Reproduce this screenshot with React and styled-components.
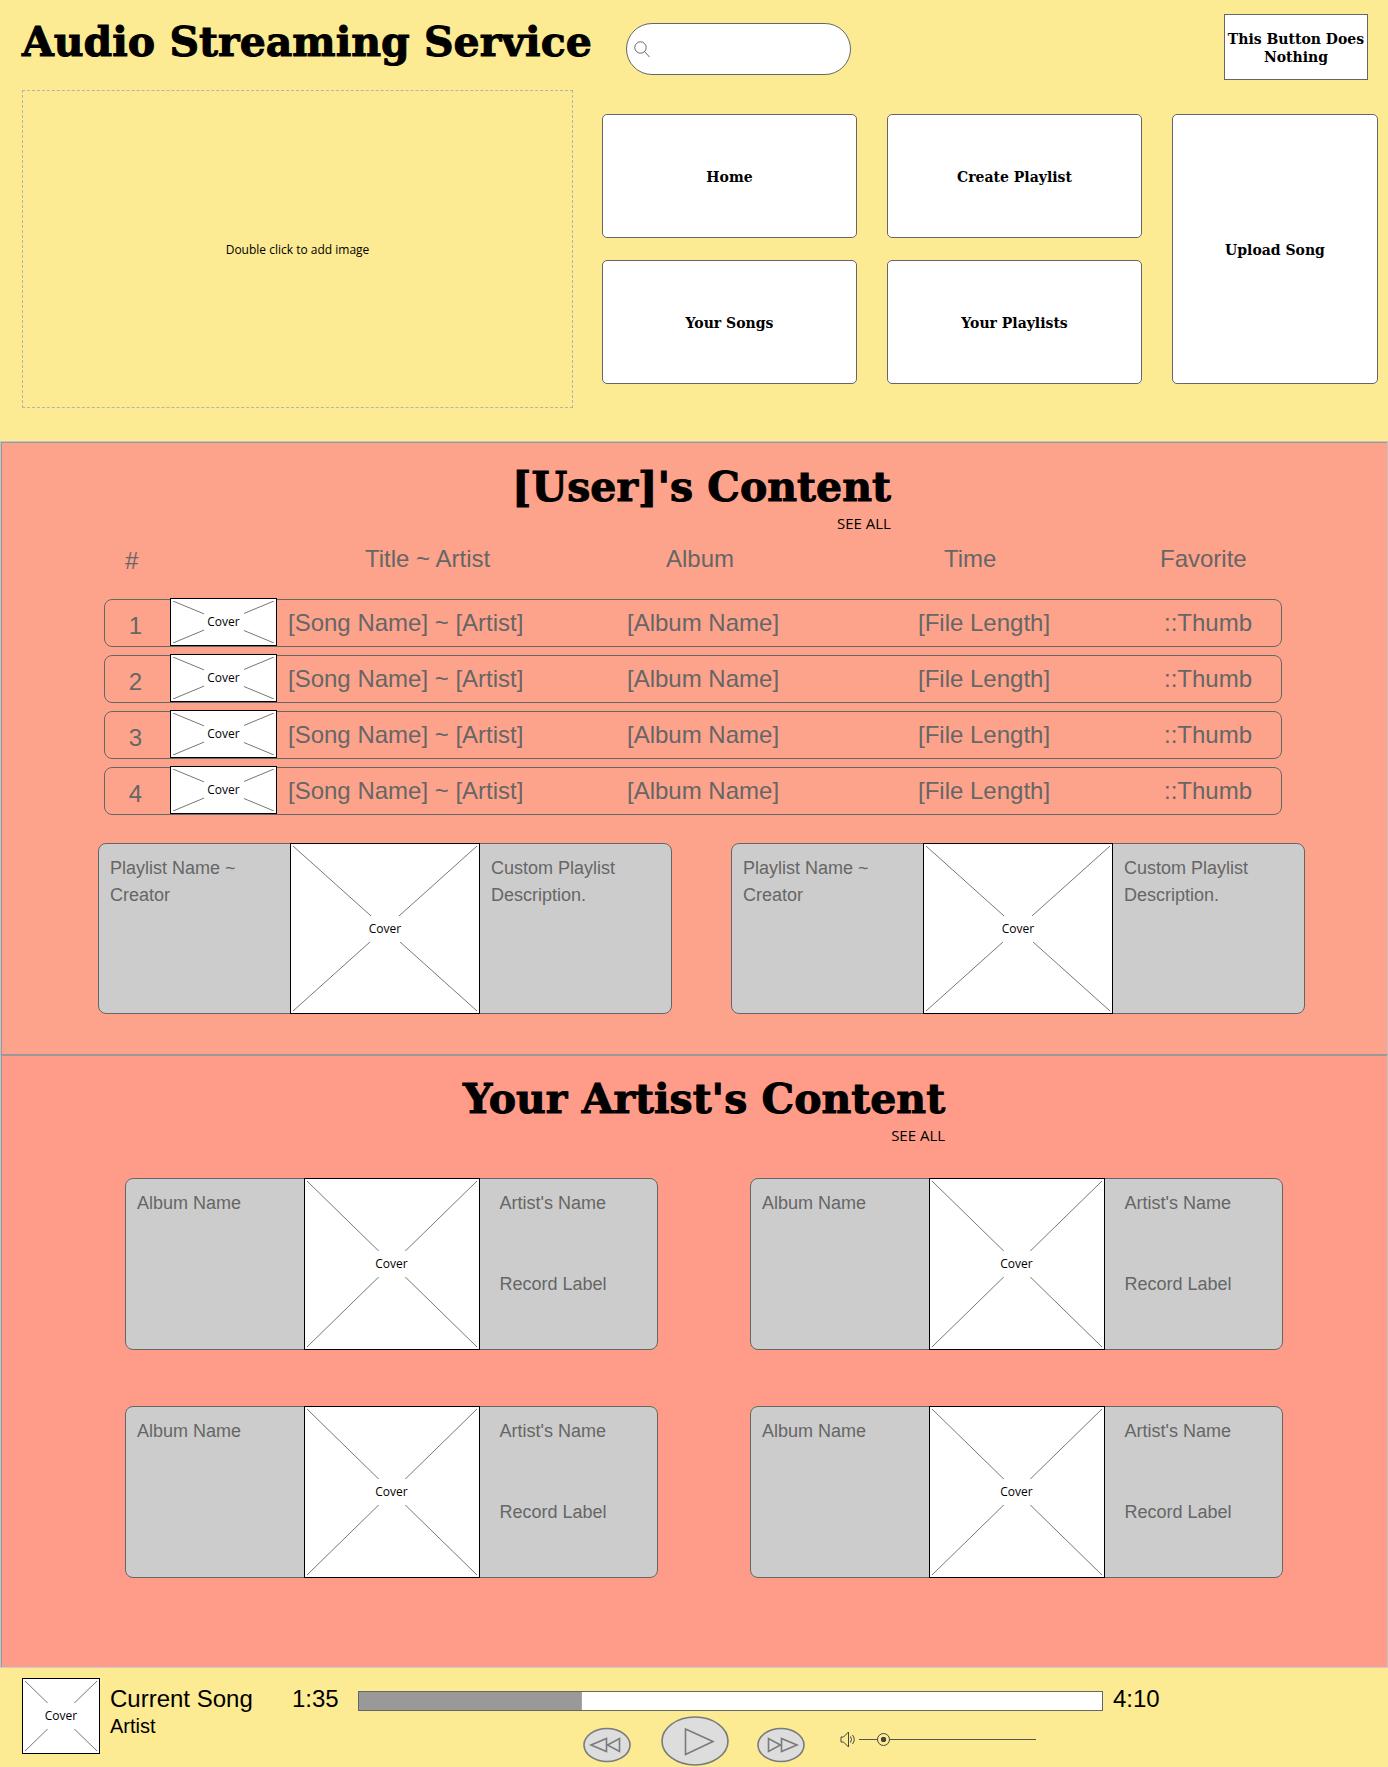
import React, { useState } from "react";
import styled, { createGlobalStyle } from "styled-components";

const display = `Ravie, "DejaVu Serif", serif`;
const humanist = `"Segoe UI", "Open Sans", "Noto Sans", sans-serif`;
const yellow = "#fceb93";
const ink = "#666666";

const GlobalStyle = createGlobalStyle`
  *, *::before, *::after { box-sizing: border-box; }
  body {
    margin: 0;
    background: ${yellow};
    color: #000;
    font-family: "Liberation Sans", Arial, sans-serif;
  }
  h1, h2, p { margin: 0; }
  button, input { font: inherit; color: inherit; margin: 0; }
`;

/* ---------- header ---------- */

const Header = styled.header`
  padding: 14px 10px 33px 22px;
`;

const TopBar = styled.div`
  display: flex;
  align-items: flex-start;
  padding-right: 10px;
`;

const SiteTitle = styled.h1`
  flex: none;
  width: 604px;
  font: 900 41px/56px ${display};
  -webkit-text-stroke: 1px #000;
  white-space: nowrap;
`;

const SearchBox = styled.label`
  display: flex;
  align-items: center;
  gap: 8px;
  width: 225px;
  height: 52px;
  margin-top: 9px;
  padding: 0 16px 0 7px;
  border: 1px solid ${ink};
  border-radius: 26px;
  background: #fff;
`;

const SearchInput = styled.input`
  flex: 1;
  min-width: 0;
  border: 0;
  outline: 0;
  background: transparent;
  font-size: 16px;
`;

const Button = styled.button`
  padding: 2px 0 0;
  border: 1px solid ${ink};
  border-radius: ${(p) => (p.$square ? 0 : 5)}px;
  background: #fff;
  font: 900 14px/18px ${display};
  cursor: pointer;
`;

const IdleButton = styled(Button)`
  width: 144px;
  height: 66px;
  margin-left: auto;
`;

const Hero = styled.div`
  display: grid;
  grid-template-columns: 551fr 776fr;
  gap: 29px;
  margin-top: 10px;
`;

const ImageDrop = styled.div`
  display: grid;
  place-items: center;
  height: 318px;
  padding-top: 2px;
  border: 1px dashed #b3b3b3;
  font: 12px/16px ${humanist};
`;

const Nav = styled.nav`
  display: grid;
  grid-template-columns: 255fr 255fr 206fr;
  grid-template-rows: 124px 124px;
  column-gap: 30px;
  row-gap: 22px;
  padding-top: 24px;
`;

const TallButton = styled(Button)`
  grid-column: 3;
  grid-row: 1 / span 2;
`;

/* ---------- sections ---------- */

const Section = styled.section`
  border: 1px solid #c4c4c4;
  border-bottom: 0;
  box-shadow: inset 1px 1px 0 #999;
  background: ${(p) => p.$tone};
  padding: ${(p) => p.$pad};

  & + & { border-top-color: #999; }
`;

const SectionHead = styled.div`
  display: flex;
  flex-direction: column;
  align-items: flex-end;
  width: fit-content;
  margin: 0 auto;
`;

const SectionTitle = styled.h2`
  font: 900 41px/56px ${display};
  -webkit-text-stroke: 1px #000;
  white-space: nowrap;
`;

const SeeAll = styled.a`
  color: #000;
  font: 15px/16px ${humanist};
  text-decoration: none;
`;

/* ---------- song table ---------- */

const Songs = styled.table`
  display: block;
  margin: 14px 23px 0 6px;
  color: ${ink};
  font-size: 24px;
  line-height: 28px;
`;

const SongHead = styled.thead`
  display: block;
`;

const SongHeadRow = styled.tr`
  display: grid;
  grid-template-columns: 240px 301fr 278fr 216fr 122fr;
  height: 28px;
  padding-left: 21px;
`;

const HeadCell = styled.th`
  padding: 0;
  font-weight: 400;
  text-align: left;

  &:first-child { padding-top: 2px; }
`;

const SongBody = styled.tbody`
  display: flex;
  flex-direction: column;
  gap: 8px;
  margin-top: 26px;
`;

const SongRow = styled.tr`
  display: grid;
  grid-template-columns: 65px 107px 350fr 291fr 246fr 117fr;
  height: 48px;
  border: 1px solid ${ink};
  border-radius: 8px;
`;

const Cell = styled.td`
  padding: 9px 0 0;
  white-space: nowrap;
`;

const NumberCell = styled(Cell)`
  padding: 12px 4px 0 0;
  text-align: center;
`;

const CoverCell = styled.td`
  display: grid;
  height: 48px;
  margin-top: -2px;
  padding: 0;
`;

const NameCell = styled(Cell)`
  padding-left: 11px;
`;

/* ---------- cover placeholder ---------- */

const CoverFrame = styled.div`
  display: grid;
  place-items: center;
  padding: 2px;
  border: 1px solid #000;
  background: #fff;
  color: #000;
  font: 12px/26px ${humanist};

  > * { grid-area: 1 / 1; }
`;

const Cross = styled.svg`
  display: block;
  width: 100%;
  height: 100%;
  min-height: 0;
  contain: size;
`;

const CoverLabel = styled.span`
  width: 40px;
  background: #fff;
  text-align: center;
`;

function Cover() {
  return (
    <CoverFrame>
      <Cross aria-hidden="true" stroke="#777" strokeWidth="1">
        <line x1="0" y1="0" x2="100%" y2="100%" />
        <line x1="100%" y1="0" x2="0" y2="100%" />
      </Cross>
      <CoverLabel>Cover</CoverLabel>
    </CoverFrame>
  );
}

/* ---------- cards ---------- */

const Cards = styled.div`
  display: grid;
  grid-template-columns: 1fr 1fr;
  column-gap: ${(p) => p.$gap}px;
  row-gap: 56px;
  margin-top: ${(p) => p.$top}px;
`;

const Card = styled.article`
  display: grid;
  grid-template-columns: 1fr ${(p) => p.$cover}px 1fr;
  height: ${(p) => p.$height}px;
  border: 1px solid ${ink};
  border-radius: 8px;
  background: #ccc;
  color: ${ink};
  font-size: 18px;
  line-height: 27px;

  > ${CoverFrame} { margin: -1px 0; }
`;

const CardText = styled.div`
  display: flex;
  flex-direction: column;
  gap: 54px;
  padding: 11px 30px 0 ${(p) => p.$left}px;
`;

/* ---------- player ---------- */

const Player = styled.footer`
  display: flex;
  align-items: flex-start;
  padding: 10px 22px 0;
  border-top: 1px solid #ccc;
  background: ${yellow};
  height: 100px;
`;

const PlayerCover = styled.div`
  display: grid;
  flex: none;
  width: 78px;
  height: 76px;
`;

const NowPlaying = styled.div`
  flex: none;
  width: 192px;
  padding: 7px 0 0 10px;
`;

const Song = styled.p`
  font-size: 24px;
  line-height: 28px;
`;

const Artist = styled.p`
  font-size: 20px;
  line-height: 26px;
`;

const Time = styled.span`
  flex: none;
  width: ${(p) => p.$width}px;
  padding: 7px 0 0 ${(p) => p.$left || 0}px;
  font-size: 24px;
  line-height: 28px;
`;

const Deck = styled.div`
  flex: 1;
  min-width: 0;
  padding-top: 13px;
`;

const Seek = styled.input`
  appearance: none;
  display: block;
  width: 100%;
  height: 20px;
  border: 1px solid ${ink};
  background: linear-gradient(#999, #999) no-repeat left / ${(p) => p.$fill}% 100% #fff;
  cursor: pointer;

  &::-webkit-slider-thumb {
    appearance: none;
    width: 1px;
    height: 18px;
  }
`;

const Controls = styled.div`
  display: flex;
  align-items: center;
  margin-top: 5px;
  padding-left: 225px;
`;

const RoundButton = styled.button`
  display: block;
  flex: none;
  padding: 0;
  border: 0;
  background: transparent;
  cursor: pointer;

  > svg { display: block; }
`;

const SkipButton = styled(RoundButton)`
  margin-top: 7px;
`;

const PlayButton = styled(RoundButton)`
  margin: 0 28px 0 30px;
`;

const Volume = styled.label`
  display: flex;
  align-items: center;
  gap: 3px;
  margin: 0 0 4px 35px;
`;

const VolumeRange = styled.input`
  appearance: none;
  width: 177px;
  height: 14px;
  background: linear-gradient(#555, #555) no-repeat center / 100% 1px;

  &::-webkit-slider-thumb {
    appearance: none;
    width: 13px;
    height: 13px;
    border: 1px solid #444;
    border-radius: 50%;
    background: radial-gradient(circle closest-side, #444 45%, ${yellow} 55%);
  }
`;

function SkipIcon({ flip }) {
  return (
    <svg width="48" height="36" viewBox="0 0 48 36" fill="none" stroke="#7a7a7a" strokeWidth="1.6">
      <ellipse cx="24" cy="18" rx="23" ry="16.5" fill="#ddd" />
      <g transform={flip ? "translate(48 0) scale(-1 1)" : undefined}>
        <path d="M23.5 11.5V24.5L8 18Z M36.5 11.5V24.5L24.500 18Z" />
      </g>
    </svg>
  );
}

function PlayIcon() {
  return (
    <svg width="68" height="50" viewBox="0 0 68 50" fill="none" stroke="#7a7a7a" strokeWidth="1.6">
      <ellipse cx="34" cy="25" rx="33" ry="24" fill="#ddd" />
      <path d="M24.5 13V38.5L52 25.500Z" />
    </svg>
  );
}

function SearchIcon() {
  return (
    <svg width="17" height="17" viewBox="0 0 17 17" fill="none" stroke="#666" strokeWidth="1">
      <circle cx="6.5" cy="6.5" r="5.7" />
      <path d="M10.200 10.200L15.500 16" />
    </svg>
  );
}

function SpeakerIcon() {
  return (
    <svg width="16" height="17" viewBox="0 0 16 17" fill="none" stroke="#444" strokeWidth="1">
      <path d="M1 6H3.500L8.500 1V16L3.500 11H1Z" />
      <path d="M10.500 5.500Q12.500 8.500 10.500 11.500 M12.500 4Q16 8.500 12.500 13" />
    </svg>
  );
}

const songs = [1, 2, 3, 4];
const playlists = [1, 2];
const albums = [1, 2, 3, 4];

export default function App() {
  const [position, setPosition] = useState(30);

  return (
    <>
      <GlobalStyle />
      <Header>
        <TopBar>
          <SiteTitle>Audio Streaming Service</SiteTitle>
          <SearchBox>
            <SearchIcon />
            <SearchInput type="search" aria-label="Search" />
          </SearchBox>
          <IdleButton type="button" $square>This Button Does Nothing</IdleButton>
        </TopBar>
        <Hero>
          <ImageDrop>Double click to add image</ImageDrop>
          <Nav>
            <Button type="button">Home</Button>
            <Button type="button">Create Playlist</Button>
            <TallButton type="button">Upload Song</TallButton>
            <Button type="button">Your Songs</Button>
            <Button type="button">Your Playlists</Button>
          </Nav>
        </Hero>
      </Header>

      <Section $tone="#fea38b" $pad="17px 82px 40px 97px">
        <SectionHead>
          <SectionTitle>[User]'s Content</SectionTitle>
          <SeeAll href="#songs">SEE ALL</SeeAll>
        </SectionHead>
        <Songs id="songs">
          <SongHead>
            <SongHeadRow>
              <HeadCell colSpan={2}>#</HeadCell>
              <HeadCell>Title ~ Artist</HeadCell>
              <HeadCell>Album</HeadCell>
              <HeadCell>Time</HeadCell>
              <HeadCell>Favorite</HeadCell>
            </SongHeadRow>
          </SongHead>
          <SongBody>
            {songs.map((n) => (
              <SongRow key={n}>
                <NumberCell>{n}</NumberCell>
                <CoverCell><Cover /></CoverCell>
                <NameCell>[Song Name] ~ [Artist]</NameCell>
                <Cell>[Album Name]</Cell>
                <Cell>[File Length]</Cell>
                <Cell>::Thumb</Cell>
              </SongRow>
            ))}
          </SongBody>
        </Songs>
        <Cards $gap={59} $top={28}>
          {playlists.map((n) => (
            <Card key={n} $cover={190} $height={171}>
              <CardText $left={11}>Playlist Name ~ Creator</CardText>
              <Cover />
              <CardText $left={11}>Custom Playlist Description.</CardText>
            </Card>
          ))}
        </Cards>
      </Section>

      <Section $tone="#ff9c89" $pad="16px 104px 89px 124px">
        <SectionHead>
          <SectionTitle>Your Artist's Content</SectionTitle>
          <SeeAll href="#albums">SEE ALL</SeeAll>
        </SectionHead>
        <Cards id="albums" $gap={92} $top={35}>
          {albums.map((n) => (
            <Card key={n} $cover={176} $height={172}>
              <CardText $left={11}>Album Name</CardText>
              <Cover />
              <CardText $left={20}>
                <p>Artist's Name</p>
                <p>Record Label</p>
              </CardText>
            </Card>
          ))}
        </Cards>
      </Section>

      <Player>
        <PlayerCover><Cover /></PlayerCover>
        <NowPlaying>
          <Song>Current Song</Song>
          <Artist>Artist</Artist>
        </NowPlaying>
        <Time $width={66}>1:35</Time>
        <Deck>
          <Seek
            type="range"
            aria-label="Song position"
            min="0"
            max="100"
            value={position}
            $fill={position}
            onChange={(e) => setPosition(Number(e.target.value))}
          />
          <Controls>
            <SkipButton type="button" aria-label="Previous"><SkipIcon /></SkipButton>
            <PlayButton type="button" aria-label="Play"><PlayIcon /></PlayButton>
            <SkipButton type="button" aria-label="Next"><SkipIcon flip /></SkipButton>
            <Volume>
              <SpeakerIcon />
              <VolumeRange type="range" aria-label="Volume" defaultValue="11" />
            </Volume>
          </Controls>
        </Deck>
        <Time $width={263} $left={10}>4:10</Time>
      </Player>
    </>
  );
}
